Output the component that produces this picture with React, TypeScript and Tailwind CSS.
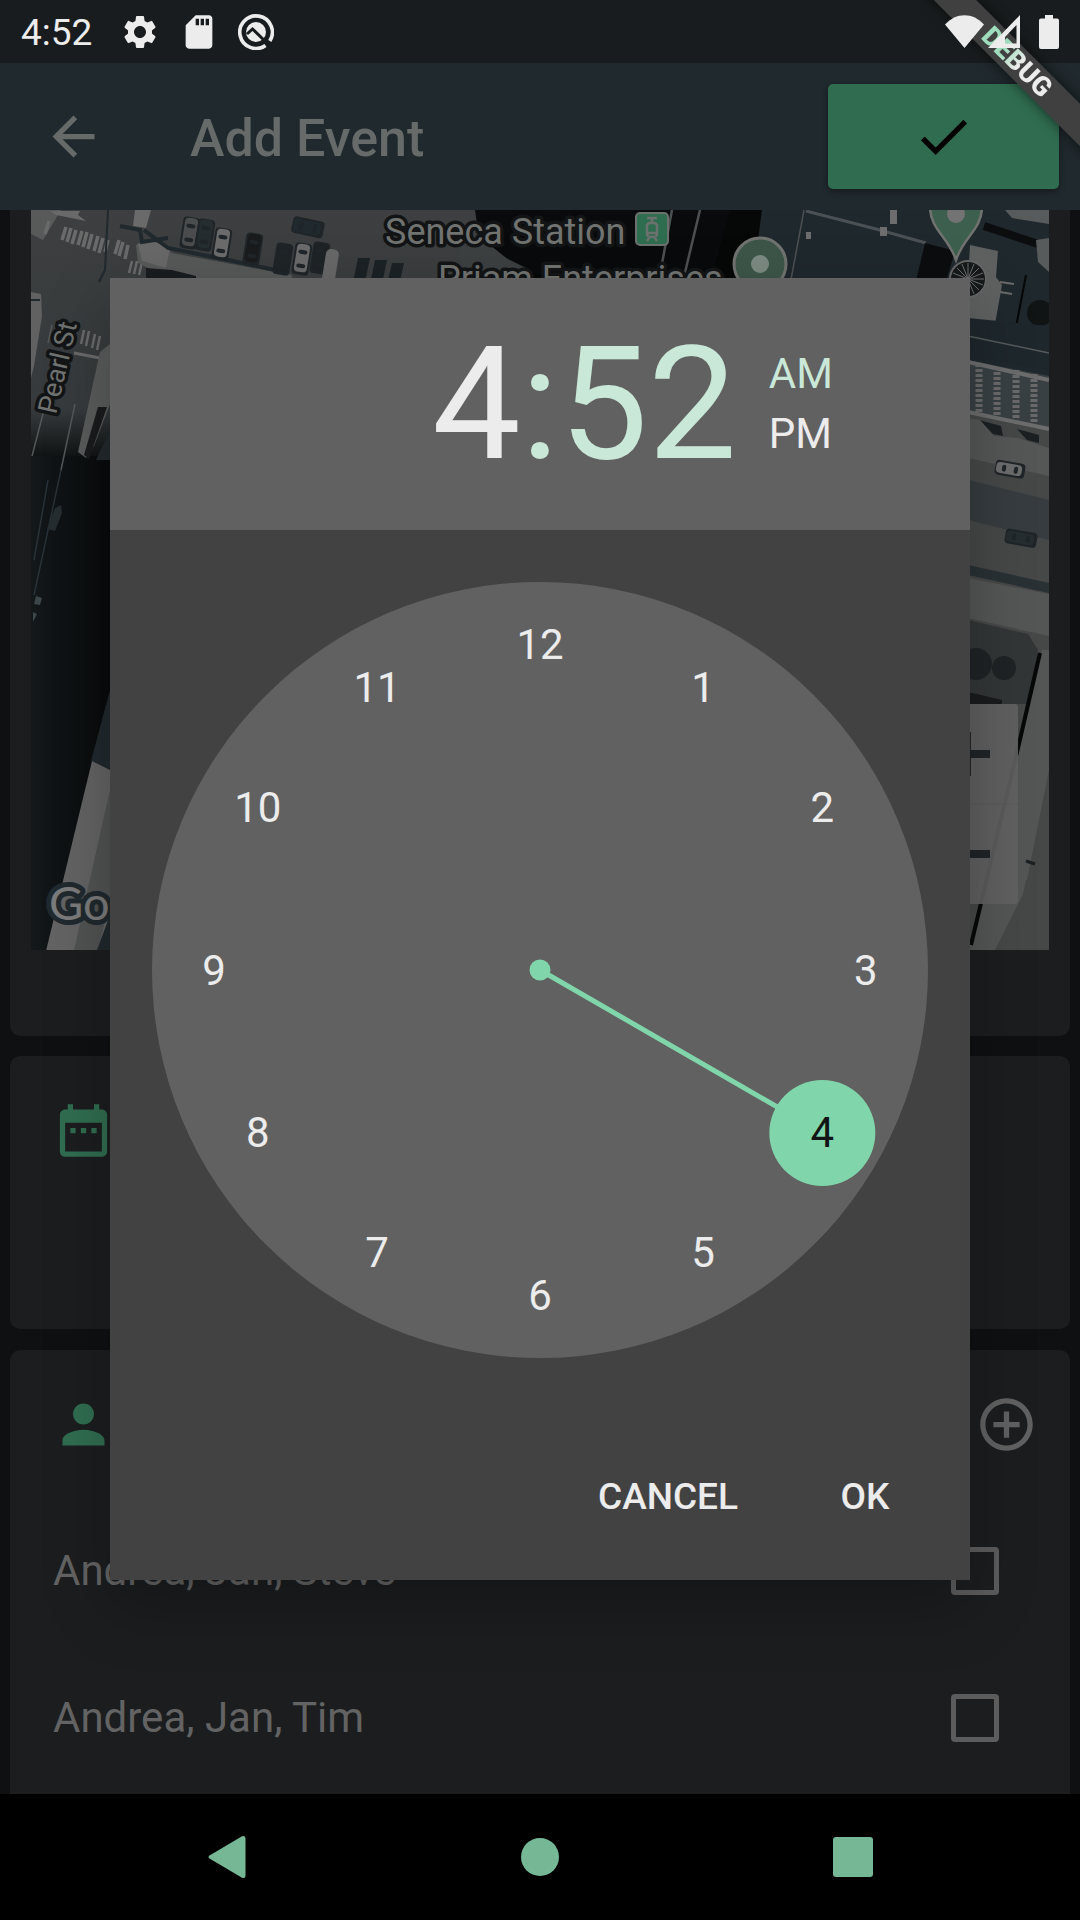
import React from "react";
import {
  MdAddCircleOutline,
  MdArrowBack,
  MdCheck,
  MdDateRange,
  MdPerson,
  MdSdCard,
  MdSettings,
} from "react-icons/md";

const HOURS = [12, 1, 2, 3, 4, 5, 6, 7, 8, 9, 10, 11];
const SELECTED_HOUR = 4;
const GROUPS = ["Andrea, Jan, Steve", "Andrea, Jan, Tim"];

function StatusBar() {
  return (
    <div className="relative z-20 flex h-[63px] items-center justify-between pl-[21px] pr-[21px] text-[#ececec]">
      <div className="flex items-center gap-[19px]">
        <span className="mr-[9px] pt-[2px] text-[37px] leading-[40px]">4:52</span>
        <MdSettings className="size-[40px]" />
        <MdSdCard className="size-[40px]" />
        <svg viewBox="0 0 36 36" className="size-[36px]" fill="none">
          <path d="M27.5 31.5A16.3 16.3 0 1 1 31.8 27" stroke="currentColor" strokeWidth="3.6" />
          <circle cx="18" cy="18" r="10" fill="currentColor" />
          <path d="M9 20l5.5-5L30 30" stroke="#191c1e" strokeWidth="3" />
        </svg>
      </div>
      <div className="flex items-center">
        <svg viewBox="0 0 39 33" className="h-[33px] w-[39px]" fill="currentColor">
          <path d="M19.500 33L0 9.500C11-3 28-3 39 9.500z" />
        </svg>
        <svg viewBox="0 0 32 33" className="ml-[4px] h-[33px] w-[32px]" fill="currentColor">
          <path fillRule="evenodd" d="M32 0V33H0zM28.500 10L17 22V28.500H28.500z" />
        </svg>
        <svg viewBox="0 0 20 34" className="ml-[19px] h-[34px] w-[20px]" fill="currentColor">
          <path d="M6 0h8v3.500h4a2 2 0 0 1 2 2V32a2 2 0 0 1-2 2H2a2 2 0 0 1-2-2V5.500a2 2 0 0 1 2-2h4z" />
        </svg>
      </div>
    </div>
  );
}

function DebugBanner() {
  return (
    <div className="pointer-events-none absolute right-0 top-0 z-10 size-[160px] overflow-hidden">
      <div className="absolute left-[-53px] top-[47px] flex h-[30px] w-[300px] rotate-45 items-center justify-center bg-[#404040] shadow-[0_0_14px_rgba(0,0,0,0.6)]">
        <span className="bg-linear-to-r from-[#9fdcbc] from-30% to-[#ececec] to-55% bg-clip-text text-[27px] font-black leading-none text-transparent">
          DEBUG
        </span>
      </div>
    </div>
  );
}

function AppBar() {
  return (
    <header className="flex h-[147px] items-center bg-[#20292e] pl-[42px] pr-[21px]">
      <button type="button" aria-label="Back" className="text-[#666a69]">
        <MdArrowBack className="size-[63px]" />
      </button>
      <h1 className="ml-[85px] flex-1 pt-[4px] text-[52px] font-medium leading-none text-[#666b69]">Add Event</h1>
      <button
        type="button"
        aria-label="Save event"
        className="flex h-[105px] w-[231px] items-center justify-center rounded-[5px] bg-[#306d50] text-black shadow-[0_2px_6px_rgba(0,0,0,0.4)]"
      >
        <MdCheck className="size-[63px]" />
      </button>
    </header>
  );
}

type CarProps = { x: number; y: number; fill: string; w?: number; h?: number; r?: number };

function Car({ x, y, fill, w = 13, h = 28, r = 9 }: CarProps) {
  return (
    <g transform={`rotate(${r} ${x} ${y})`}>
      <rect x={x - w / 2 - 2} y={y - h / 2 - 1} width={w + 4} height={h + 4} rx="4" fill="#1f2528" />
      <rect x={x - w / 2} y={y - h / 2} width={w} height={h} rx="4" fill={fill} />
      <rect x={x - w / 2 + 2} y={y - h / 2 + 6} width={w - 4} height="4" rx="2" fill="#1f2528" />
      <rect x={x - w / 2 + 2} y={y + h / 2 - 8} width={w - 4} height="4" rx="2" fill="#1f2528" />
    </g>
  );
}

function MapView() {
  return (
    <svg
      viewBox="31 210 1018 740"
      className="block w-full"
      role="img"
      aria-label="Satellite map near Seneca Station"
    >
      <defs>
        <linearGradient id="street" x1="0" y1="0" x2="0" y2="1">
          <stop offset="0" stopColor="#3d3f40" />
          <stop offset="0.8" stopColor="#363a3c" />
          <stop offset="1" stopColor="#0e1112" />
        </linearGradient>
        <linearGradient id="shade" x1="0" y1="0" x2="1" y2="0">
          <stop offset="0" stopColor="#13181a" />
          <stop offset="1" stopColor="#070809" />
        </linearGradient>
      </defs>
      <rect x="31" y="210" width="1018" height="740" fill="#060808" />

      {/* Pearl Street and its junction */}
      <rect x="31" y="210" width="500" height="250" fill="url(#street)" />
      <rect x="31" y="456" width="90" height="494" fill="url(#shade)" />
      <path d="M31 210h30l-12 20-6 10-12-6z" fill="#585a5a" />
      <path d="M50 211h30l-2 4 8 6-30-6z" fill="#696969" />
      <g stroke="#6a6a6a" strokeWidth="3.500">
        <path d="M66 227l-4 13M71 228l-4 14M76 230l-4 14M82 231l-4 14M87 232l-4 15M92 234l-4 15M98 236l-4 15M103 238l-4 15M108 240l-3 12" />
        <path d="M119 240l-4 14M123 242l-4 14M128 245l-3 14M49 221l-4 13" />
        <path d="M132 261l-3 12M137 261l-3 13M142 262l-3 13" strokeWidth="2.500" />
        <path d="M84 330l-3 14M89 331l-3 15M95 334l-3 14M100 336l-3 14" strokeWidth="2.500" />
        <path d="M74 353l26 5" strokeWidth="3" />
      </g>
      <path d="M31 292l10 2 1 22-8 50-3 12z" fill="#616161" />
      <path d="M31 300h9" stroke="#20292e" strokeWidth="2" />
      <g fill="none" stroke="#54585a" strokeWidth="1.500">
        <path d="M44 410L32 456M75 404L61 470M52 325l-4 18" />
        <path d="M61 470L34 595M48 480L34 560" stroke="#283238" />
      </g>
      <path d="M108 210l-3 60-6 12" fill="none" stroke="#20292e" strokeWidth="2" />
      <path d="M100 352l10-8v60l-16 42-8 12-8-6z" fill="#5a5b5b" />
      <path d="M98 407h9l-18 52-5-4z" fill="#1a1b1c" />
      <path d="M110 430v30H96z" fill="#22292c" />
      <path d="M55 508l6-3 1 8-7 18-8-2z" fill="#252d31" />
      <path d="M36 596l6 2-2 7-6-1zM33 612l4 2-4 8z" fill="#3c474c" />
      <path d="M110 690v80l-19-9z" fill="#20292e" />

      {/* Parking lot */}
      <path d="M136 245c12-8 28-2 36 8l120 22v4H170l-32-16z" fill="#575858" />
      <path d="M138 244l14-3 18 7-4 20-24-7z" fill="#686868" />
      <path d="M135 210h16l-5 18-13-2z" fill="#6a6a6a" />
      <path d="M120 226l20 4 2 12 26-4M144 230l24 18 60 12 56 12" fill="none" stroke="#20292e" strokeWidth="4" />
      <path d="M146 268l26 2 24 6v3h-50z" fill="#1a1d1f" />
      <Car x={190} y={232} fill="#4a4c4d" />
      <Car x={205} y={234} fill="#262d31" />
      <Car x={222} y={243} fill="#6b6b6b" />
      <Car x={253} y={248} fill="#1a1b1c" />
      <Car x={283} y={258} fill="#1f2427" />
      <Car x={302} y={258} fill="#6a6a6a" />
      <Car x={320} y={257} fill="#1e2326" />
      <rect x="324" y="249" width="13" height="34" rx="5" fill="#686868" transform="rotate(9 330 266)" />
      <Car x={307} y={227} fill="#20292e" r={-78} />
      <path d="M358 258h12l-5 24h-12zM375 260h12l-5 24h-12zM392 263h12l-5 22h-12z" fill="#1b2226" />

      {/* Rooftops along the north edge */}
      <path d="M475 210h255l-20 75H560L480 245z" fill="#080a0b" />
      <path d="M455 235l35 10 45 36-70-5z" fill="#3d4041" />
      <path d="M672 210l-14 75M700 210l-18 75" stroke="#4d5051" strokeWidth="2.500" />
      <path d="M762 210h287v260l-80-10V285H770l-14-30z" fill="#1f282d" />
      <path d="M804 210l-14 75" stroke="#4d5051" strokeWidth="1.500" />
      <path d="M806 211l70 18 50 14" fill="none" stroke="#4a5053" strokeWidth="3" />
      <path d="M925 243l30 8-10 34h-30z" fill="#0b0d0e" />
      <path d="M880 227h7v9h-7zM806 232h5v7h-5zM890 210h7v14h-7z" fill="#6d6d6d" />
      <path d="M984 226l60 20" stroke="#0b0d0e" strokeWidth="8" />
      <path d="M1005 210h44v14l-37-6zM1036 240l13-2v34l-11-10z" fill="#585b5c" />
      <path d="M970 245l28 6-2 26 6 8-10 56h-24v-60z" fill="#5f6060" />
      <path d="M1000 282l14 2M1000 292l12 2M990 320l-4 20" stroke="#696969" strokeWidth="2" />
      <path d="M1026 275l-10 52" stroke="#060808" strokeWidth="2" />
      <circle cx="1040" cy="313" r="13" fill="#111415" />
      <path d="M968 318l81 8v44l-81-14z" fill="#1e272c" />
      <path d="M968 336l81 17" stroke="#565a5b" strokeWidth="1.500" />
      <circle cx="968" cy="279" r="18" fill="#16191a" stroke="#666" strokeWidth="2" />
      <path
        d="M968 263v32M952 279h32M957 268l22 22M957 290l22-22M962 264l12 30M953 285l30-12M962 294l12-30M953 273l30 12"
        stroke="#6c6c6c"
      />

      {/* East street */}
      <path d="M968 362l81 16v572h-81z" fill="#464747" />
      <path d="M968 360l81 16v50l-81-14z" fill="#394043" />
      <path d="M968 362l81 18M968 412l81 17" stroke="#6d6d6d" strokeWidth="4" />
      <path
        d="M979 364v48M997 367v48M1016 370v48M1034 374v48"
        stroke="#6a6a6a"
        strokeWidth="7"
        strokeDasharray="3 2"
      />
      <path d="M979 420l22 6 2 10-10-2zM1017 429l22 6v8l-12-3z" fill="#1b2022" />
      <path d="M968 418l12 2 14 16 24 2 31 10v28l-81-18z" fill="#555656" />
      <path d="M968 480l81 20v40l-81-20z" fill="#363c3f" />
      <Car x={1009} y={469} fill="#6c6c6c" w={11} h={26} r={-80} />
      <Car x={1020} y={538} fill="#252d31" w={11} h={28} r={-80} />
      <path d="M968 565l81 18v10l-81-18z" fill="#293135" />
      <path d="M968 578l81 16v42l-81-18z" fill="#545555" />
      <path d="M968 620l60 14 10 16-8 54h-62z" fill="#333637" />
      <circle cx="976" cy="664" r="16" fill="#1f2325" />
      <circle cx="1004" cy="668" r="12" fill="#1f2325" />
      <path d="M968 692l34 8v4h-34z" fill="#1a1b1c" />
      <path d="M1042 650h7v120l-24 120-30 60h-27z" fill="#545555" />
      <path d="M1026 880h23v70h-38z" fill="#464848" />
      <path d="M1040 653L1018 748L971 945" fill="none" stroke="#070808" strokeWidth="4" />
      <path d="M1026 861l9 3" stroke="#1b2022" strokeWidth="3" />

      {/* Building in the south-west corner */}
      <path d="M92 761l20 10v180H46z" fill="#636363" />
      <path d="M110 790L74 950h24l12-50z" fill="#515252" />
      <path d="M110 915v35H97z" fill="#20292e" />

      {/* Zoom control */}
      <rect x="900" y="704" width="118" height="200" rx="3" fill="#626262" opacity="0.92" />
      <path d="M900 804h118" stroke="#5b5b5b" />
      <path d="M950 754h40M967 732v44M950 854h40" stroke="#202427" strokeWidth="8" />

      {/* Places */}
      <g
        className="font-[Roboto]"
        fill="#717371"
        stroke="#121415"
        strokeWidth="7"
        strokeLinejoin="round"
        paintOrder="stroke"
      >
        <text x="385" y="244" fontSize="36">Seneca Station</text>
        <text x="438" y="291" fontSize="36">Priam Enterprises</text>
        <text x="56" y="415" fontSize="27" transform="rotate(-77 56 415)">Pearl St</text>
        <text x="49" y="920" fontSize="47" className="font-[Lato]" fill="#7b7b7b" stroke="#20292e" strokeWidth="10">
          Google
        </text>
      </g>
      <rect x="636" y="213" width="32" height="32" rx="4" fill="#2f6d50" stroke="#6c706e" strokeWidth="2" />
      <g fill="none" stroke="#6c706e" strokeWidth="2.500">
        <path d="M647 218h10M652 218v4" />
        <rect x="647" y="223" width="10" height="14" rx="3" />
        <path d="M648 233h8M649 238l-2 3M655 238l2 3" />
      </g>
      <circle cx="760" cy="264" r="26" fill="#3d5549" stroke="#717371" strokeWidth="3" />
      <circle cx="760" cy="264" r="9" fill="#7b8a82" />
      <path d="M930 206c0 24 18 30 26 54c8-24 26-30 26-54z" fill="#3d5f4e" stroke="#717371" strokeWidth="2.500" />
      <circle cx="956" cy="214" r="9" fill="#737373" />
    </svg>
  );
}

function EventForm() {
  return (
    <main className="flex flex-1 flex-col bg-[#0e1011] px-[10px]">
      <section className="rounded-b-[10px] bg-[#1b1d1f] px-[21px] pb-[86px]">
        <MapView />
      </section>
      <section className="mt-[20px] rounded-[10px] bg-[#1b1d1f] pb-[167px] pl-[42px] pt-[43px]">
        <MdDateRange className="size-[63px] text-[#306d50]" />
      </section>
      <section className="mt-[21px] flex-1 rounded-t-[10px] bg-[#1b1d1f]">
        <div className="flex h-[147px] items-center justify-between pl-[42px] pr-[32px] pt-[2px]">
          <MdPerson className="size-[63px] text-[#306d50]" />
          <button type="button" aria-label="Add person" className="text-[#616161]">
            <MdAddCircleOutline className="size-[63px]" />
          </button>
        </div>
        {GROUPS.map((group) => (
          <label key={group} className="flex h-[147px] items-center justify-between pl-[43px] pr-[71px]">
            <span className="text-[42px] leading-none text-[#636363]">{group}</span>
            <input
              type="checkbox"
              className="size-[48px] appearance-none rounded-[4px] border-[5px] border-[#5c5c5c] checked:bg-[#306d50]"
            />
          </label>
        ))}
      </section>
    </main>
  );
}

function ClockFace() {
  const handAngle = (SELECTED_HOUR * Math.PI) / 6;
  const handX = 388 + 326 * Math.sin(handAngle);
  const handY = 388 - 326 * Math.cos(handAngle);
  return (
    <div className="relative aspect-square w-full">
      <svg viewBox="0 0 776 776" className="block w-full" aria-hidden="true">
        <circle cx="388" cy="388" r="388" fill="#616161" />
        <line x1="388" y1="388" x2={handX} y2={handY} stroke="#80d6aa" strokeWidth="5" />
        <circle cx="388" cy="388" r="10.500" fill="#80d6aa" />
        <circle cx={handX} cy={handY} r="53" fill="#80d6aa" />
      </svg>
      {HOURS.map((hour) => {
        const angle = (hour * Math.PI) / 6;
        return (
          <button
            key={hour}
            type="button"
            aria-pressed={hour === SELECTED_HOUR}
            className="absolute flex size-[96px] -translate-x-1/2 -translate-y-1/2 items-center justify-center pt-[2px] text-[42px] leading-none text-[#ececec] aria-pressed:text-[#111314]"
            style={{
              left: `${50 + 42 * Math.sin(angle)}%`,
              top: `${50 - 42 * Math.cos(angle)}%`,
            }}
          >
            {hour}
          </button>
        );
      })}
    </div>
  );
}

function TimePicker() {
  return (
    <div className="absolute inset-x-0 bottom-[126px] top-[63px] z-30 flex items-center justify-center px-[110px]">
      <div
        role="dialog"
        aria-label="Select time"
        className="w-full bg-[#424242] shadow-[0_24px_60px_0_rgba(0,0,0,0.25)]"
      >
        <div className="grid h-[252px] grid-cols-[1fr_auto_1fr] items-center bg-[#616161] text-[158px] leading-none text-[#c9e8d8]">
          <button type="button" className="justify-self-end text-[#ececec]">4</button>
          <span>:</span>
          <div className="flex items-center gap-[32px]">
            <button type="button">52</button>
            <div className="flex flex-col text-[42px] leading-[60px]">
              <button type="button" className="text-left">AM</button>
              <button type="button" className="text-left text-[#ececec]">PM</button>
            </div>
          </div>
        </div>
        <div className="px-[42px] pt-[52px]">
          <ClockFace />
        </div>
        <div className="flex justify-end gap-[21px] pb-[35px] pr-[21px] pt-[92px] text-[37px] font-medium text-[#ececec]">
          <button type="button" className="h-[95px] px-[22px]">CANCEL</button>
          <button type="button" className="h-[95px] w-[168px]">OK</button>
        </div>
      </div>
    </div>
  );
}

function NavigationBar() {
  return (
    <nav className="flex h-[126px] items-center bg-black px-[70px] text-[#76b896]">
      <button type="button" aria-label="Back" className="flex flex-1 justify-center">
        <svg viewBox="0 0 38 44" className="h-[44px] w-[38px]" fill="currentColor">
          <path d="M1.500 20.500L34 1.300Q37.500 0 37.500 3.500V40.500Q37.500 44 34 42.700L1.500 23.500Q-.5 22 1.500 20.500z" />
        </svg>
      </button>
      <button type="button" aria-label="Home" className="flex flex-1 justify-center">
        <span className="size-[38px] rounded-full bg-[#76b896]" />
      </button>
      <button type="button" aria-label="Recent apps" className="flex flex-1 justify-center">
        <span className="size-[40px] rounded-[3px] bg-[#76b896]" />
      </button>
    </nav>
  );
}

export default function App() {
  return (
    <div className="relative flex min-h-screen flex-col overflow-hidden bg-[#191c1e] font-[Roboto,sans-serif]">
      <DebugBanner />
      <StatusBar />
      <AppBar />
      <EventForm />
      <NavigationBar />
      <TimePicker />
    </div>
  );
}
